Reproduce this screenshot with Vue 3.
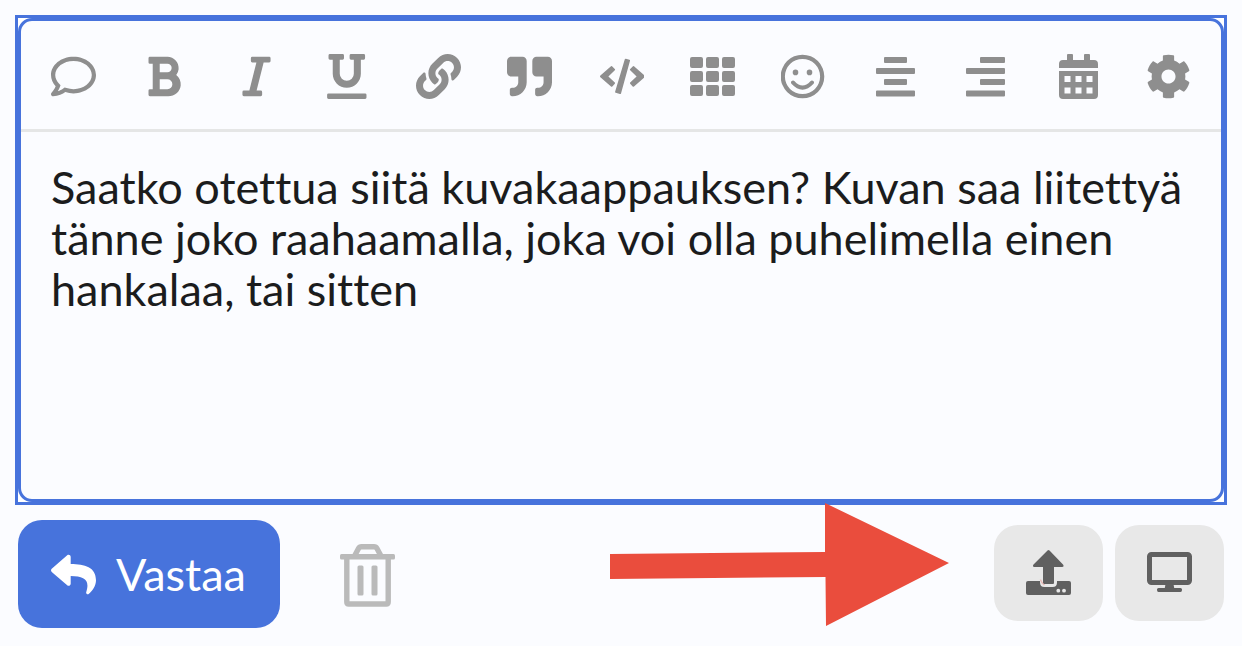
<script setup>
import { ref } from 'vue'

const message = ref(
  'Saatko otettua siitä kuvakaappauksen? Kuvan saa liitettyä tänne joko raahaamalla, joka voi olla puhelimella einen hankalaa, tai sitten'
)

const tools = [
  {
    label: 'Kommentti',
    box: '0 0 512 512',
    d: 'M256 32C114.6 32 0 125.1 0 240c0 47.6 19.9 91.2 52.9 126.3C38 405.7 7 439.1 6.5 439.5c-6.6 7-8.4 17.2-4.6 26S14.4 480 24 480c61.5 0 110-25.7 139.1-46.3C192 442.8 223.2 448 256 448c141.4 0 256-93.1 256-208S397.4 32 256 32zm0 368c-26.7 0-53.1-4.1-78.4-12.1l-22.7-7.2-19.5 13.8c-14.3 10.1-33.9 21.4-57.5 29 7.3-12.1 14.4-25.7 19.9-40.2l10.6-28.1-20.6-21.8C69.7 314.1 48 282.2 48 240c0-88.2 93.3-160 208-160s208 71.8 208 160-93.3 160-208 160z'
  },
  {
    label: 'Lihavointi',
    box: '-56 0 512 512',
    d: 'M333.49 238a122 122 0 0 0 27-65.21C367.87 96.49 308 32 233.42 32H34a16 16 0 0 0-16 16v48a16 16 0 0 0 16 16h31.87v288H34a16 16 0 0 0-16 16v48a16 16 0 0 0 16 16h209.32c70.8 0 134.14-51.75 141-122.4 4.74-48.45-16.39-92.06-50.83-119.6zM145.66 112h87.76a48 48 0 0 1 0 96h-87.76zm87.76 288h-87.76V288h87.76a56 56 0 0 1 0 112z'
  },
  {
    label: 'Kursivointi',
    box: '-96 0 512 512',
    d: 'M320 48v32a16 16 0 0 1-16 16h-62.76l-80 320H208a16 16 0 0 1 16 16v32a16 16 0 0 1-16 16H16a16 16 0 0 1-16-16v-32a16 16 0 0 1 16-16h62.76l80-320H112a16 16 0 0 1-16-16V48a16 16 0 0 1 16-16h192a16 16 0 0 1 16 16z'
  },
  {
    label: 'Alleviivaus',
    box: '-24 0 512 512',
    d: 'M32 64h32v160c0 88.22 71.78 160 160 160s160-71.78 160-160V64h32a16 16 0 0 0 16-16V16a16 16 0 0 0-16-16H272a16 16 0 0 0-16 16v32a16 16 0 0 0 16 16h32v160a80 80 0 0 1-160 0V64h32a16 16 0 0 0 16-16V16a16 16 0 0 0-16-16H32a16 16 0 0 0-16 16v32a16 16 0 0 0 16 16zm400 384H16a16 16 0 0 0-16 16v32a16 16 0 0 0 16 16h416a16 16 0 0 0 16-16v-32a16 16 0 0 0-16-16z'
  },
  {
    label: 'Linkki',
    box: '0 0 512 512',
    d: 'M326.612 185.391c59.747 59.809 58.927 155.698.36 214.59-.11.12-.24.25-.36.37l-67.2 67.2c-59.27 59.27-155.699 59.262-214.96 0-59.27-59.26-59.27-155.7 0-214.96l37.106-37.106c9.84-9.84 26.786-3.3 27.294 10.606.648 17.722 3.826 35.527 9.69 52.721 1.986 5.822.567 12.262-3.783 16.612l-13.087 13.087c-28.026 28.026-28.905 73.66-1.155 101.96 28.024 28.579 74.086 28.749 102.325.51l67.2-67.19c28.191-28.191 28.073-73.757 0-101.83-3.701-3.694-7.429-6.564-10.341-8.569a16.037 16.037 0 0 1-6.947-12.606c-.396-10.567 3.348-21.456 11.698-29.806l21.054-21.055c5.521-5.521 14.182-6.199 20.584-1.731a152.482 152.482 0 0 1 20.522 17.197zM467.547 44.449c-59.261-59.262-155.69-59.27-214.96 0l-67.2 67.2c-.12.12-.25.25-.36.37-58.566 58.892-59.387 154.781.36 214.59a152.454 152.454 0 0 0 20.521 17.196c6.402 4.468 15.064 3.789 20.584-1.731l21.054-21.055c8.35-8.35 12.094-19.239 11.698-29.806a16.037 16.037 0 0 0-6.947-12.606c-2.912-2.005-6.64-4.875-10.341-8.569-28.073-28.073-28.191-73.639 0-101.83l67.2-67.19c28.239-28.239 74.3-28.069 102.325.51 27.75 28.3 26.872 73.934-1.155 101.96l-13.087 13.087c-4.35 4.35-5.769 10.79-3.783 16.612 5.864 17.194 9.042 34.999 9.69 52.721.509 13.906 17.454 20.446 27.294 10.606l37.106-37.106c59.271-59.259 59.271-155.699.001-214.959z'
  },
  {
    label: 'Lainaus',
    box: '0 0 512 512',
    d: 'M464 32H336c-26.5 0-48 21.5-48 48v128c0 26.5 21.5 48 48 48h80v64c0 35.3-28.7 64-64 64h-8c-13.3 0-24 10.7-24 24v48c0 13.3 10.7 24 24 24h8c88.4 0 160-71.6 160-160V80c0-26.5-21.5-48-48-48zm-288 0H48C21.5 32 0 53.5 0 80v128c0 26.5 21.5 48 48 48h80v64c0 35.3-28.7 64-64 64h-8c-13.3 0-24 10.7-24 24v48c0 13.3 10.7 24 24 24h8c88.4 0 160-71.6 160-160V80c0-26.5-21.5-48-48-48z'
  },
  {
    label: 'Koodi',
    box: '-1 0 45 45',
    d: 'M.4 21.6 11 12.3q.7-.5 1.3.1l2.5 2.6q.6.7 0 1.3L8.4 22.4l6.4 6q.6.6 0 1.3l-2.5 2.7q-.6.5-1.3 0L.4 23.2q-.8-.8 0-1.6zM44.6 21.6 34 12.3q-.7-.5-1.3.1L30.2 15q-.6.7 0 1.3l6.4 6.1-6.4 6q-.6.6 0 1.3l2.5 2.7q.6.5 1.3 0l10.6-9.2q.8-.8 0-1.6zM25.9 4.7l3.5 1q.8.3.6 1.1l-9 32.6q-.3.8-1.1.6l-4.2-1.2q-.8-.2-.6-1l9.7-32.5q.3-.8 1.1-.6z'
  },
  {
    label: 'Taulukko',
    box: '0 0 45 45',
    d: [3, 17, 31]
      .flatMap(y => [0, 16, 32].map(x => `M${x + 2} ${y}h9q2 0 2 2v7q0 2-2 2h-9q-2 0-2-2v-7q0-2 2-2z`))
      .join('')
  },
  {
    label: 'Hymiö',
    box: '1 0 45 45',
    d: 'M22.5.7a21.8 21.8 0 1 0 0 43.6 21.8 21.8 0 0 0 0-43.6zm0 4.2a17.6 17.6 0 1 1 0 35.2 17.6 17.6 0 0 1 0-35.2zM15.5 15.6a2.8 2.8 0 1 0 0 5.6 2.8 2.8 0 0 0 0-5.6zm14 0a2.8 2.8 0 1 0 0 5.6 2.8 2.8 0 0 0 0-5.6zM14.6 27.2q7.9 8.6 15.8 0c1.9-1.9 4.7.5 3.2 2.6q-11.1 11.8-22.2 0c-1.5-2.1 1.3-4.5 3.2-2.6z'
  },
  {
    label: 'Keskitä',
    box: '-1 0 45 45',
    d: 'M12 3h21q1 0 1 1v4q0 1-1 1H12q-1 0-1-1V4q0-1 1-1zM4 14h37q1 0 1 1v4q0 1-1 1H4q-1 0-1-1v-4q0-1 1-1zM12 25h21q1 0 1 1v4q0 1-1 1H12q-1 0-1-1v-4q0-1 1-1zM4 36.5h37q1 0 1 1v4q0 1-1 1H4q-1 0-1-1v-4q0-1 1-1z'
  },
  {
    label: 'Tasaa oikealle',
    box: '1 0 45 45',
    d: 'M18 3h23q1 0 1 1v4q0 1-1 1H18q-1 0-1-1V4q0-1 1-1zM4 14h37q1 0 1 1v4q0 1-1 1H4q-1 0-1-1v-4q0-1 1-1zM18 25h23q1 0 1 1v4q0 1-1 1H18q-1 0-1-1v-4q0-1 1-1zM4 36.5h37q1 0 1 1v4q0 1-1 1H4q-1 0-1-1v-4q0-1 1-1z'
  },
  {
    label: 'Päivämäärä',
    box: '-1 0 45 45',
    d: 'M3 14v-4q0-4 4-4h4V1q0-1 1-1h4q1 0 1 1v5h11V1q0-1 1-1h4q1 0 1 1v5h4q4 0 4 4v4zM3 17h39v24q0 4-4 4H7q-4 0-4-4zM8.500 22v6h6v-6zm11 0v6h6v-6zm11 0v6h6v-6zM8.500 33.500v6h6v-6zm11 0v6h6v-6zm11 0v6h6v-6z'
  },
  {
    label: 'Asetukset',
    box: '0 0 512 512',
    d: 'M487.4 315.7l-42.6-24.6c4.3-23.2 4.3-47 0-70.2l42.6-24.6c4.9-2.8 7.1-8.6 5.5-14-11.1-35.6-30-67.8-54.7-94.6-3.8-4.1-10-5.1-14.8-2.3L380.8 110c-17.9-15.4-38.5-27.3-60.8-35.1V25.8c0-5.6-3.9-10.5-9.4-11.7-36.7-8.2-74.3-7.8-109.2 0-5.5 1.2-9.4 6.1-9.4 11.7V75c-22.2 7.9-42.8 19.8-60.8 35.1L88.7 85.5c-4.9-2.8-11-1.9-14.8 2.3-24.7 26.7-43.6 58.9-54.7 94.6-1.7 5.4.6 11.2 5.5 14L67.3 221c-4.3 23.2-4.3 47 0 70.2l-42.6 24.6c-4.9 2.8-7.1 8.6-5.5 14 11.1 35.6 30 67.8 54.7 94.6 3.8 4.1 10 5.1 14.8 2.3l42.6-24.6c17.9 15.4 38.5 27.3 60.8 35.1v49.2c0 5.6 3.9 10.5 9.4 11.7 36.7 8.2 74.3 7.8 109.2 0 5.5-1.2 9.4-6.1 9.4-11.7v-49.2c22.2-7.9 42.8-19.8 60.8-35.1l42.6 24.6c4.9 2.8 11 1.9 14.8-2.3 24.7-26.7 43.6-58.9 54.7-94.6 1.5-5.5-.7-11.3-5.6-14.1zM256 336c-44.1 0-80-35.9-80-80s35.9-80 80-80 80 35.9 80 80-35.9 80-80 80z'
  }
]
</script>

<template>
  <main class="composer">
    <div class="focus-frame">
      <div class="editor">
        <div class="toolbar" role="toolbar" aria-label="Muotoilu">
          <button v-for="tool in tools" :key="tool.label" type="button" class="tool" :aria-label="tool.label">
            <svg class="icon" :viewBox="tool.box" aria-hidden="true">
              <path :d="tool.d" fill="currentColor" fill-rule="evenodd" />
            </svg>
          </button>
        </div>
        <textarea v-model="message" class="message" aria-label="Viesti" spellcheck="false"></textarea>
      </div>
    </div>

    <div class="actions">
      <button type="button" class="reply">
        <svg class="icon" viewBox="0 0 512 512" aria-hidden="true">
          <path
            fill="currentColor"
            d="M8.309 189.836L184.313 37.851C199.719 24.546 224 35.347 224 56.015v80.053c160.629 1.839 288 34.032 288 186.258 0 61.441-39.581 122.309-83.333 154.132-13.653 9.931-33.111-2.533-28.077-18.631 45.344-145.012-21.507-183.51-176.59-185.742V360c0 20.7-24.3 31.453-39.687 18.164l-176.004-152c-11.071-9.562-11.086-26.753 0-36.328z"
          />
        </svg>
        <span>Vastaa</span>
      </button>

      <button type="button" class="discard" aria-label="Hylkää">
        <svg class="bin" viewBox="0 0 55 63" aria-hidden="true" fill="none" stroke="currentColor">
          <path d="M14.5 12 18.500 4.500Q19.500 2.700 21.500 2.700H34Q36 2.700 37 4.500L41 12" stroke-width="5.4" />
          <rect x="0" y="10" width="55" height="5.5" rx="1.5" fill="currentColor" stroke="none" />
          <path d="M6.800 14V58Q6.800 60 8.800 60H46.200Q48.200 60 48.200 58V14" stroke-width="5.4" />
          <rect x="17.5" y="21.5" width="6" height="30" rx="1.5" fill="currentColor" stroke="none" />
          <rect x="31.5" y="21.5" width="6" height="30" rx="1.5" fill="currentColor" stroke="none" />
        </svg>
      </button>

      <div class="attach">
        <button type="button" class="tile" aria-label="Lataa tiedosto">
          <svg class="icon" viewBox="0 0 45 45" aria-hidden="true">
            <rect y="31" width="45" height="14" rx="2" fill="currentColor" />
            <path d="M15.5 29v3.500q0 3 3 3h8q3 0 3-3V29" fill="currentColor" stroke="#e8e8e8" stroke-width="3" />
            <path d="M14.5 29.500q.5 3 4 5.500" fill="none" stroke="#e9b9b6" stroke-width="1.5" />
            <path
              fill="currentColor"
              d="M21.5.5q1-1 2 0L37 14.500q1.500 2.500-1 2.500H28v15q0 2-2 2h-7q-2 0-2-2V17H8.500Q6 17 7.500 14.500z"
            />
            <circle cx="32.3" cy="40.7" r="1.9" fill="#e8e8e8" />
            <circle cx="38" cy="40.7" r="1.9" fill="#e8e8e8" />
          </svg>
        </button>
        <button type="button" class="tile" aria-label="Näyttö">
          <svg class="icon" viewBox="0 0 45 45" aria-hidden="true">
            <rect x="2.5" y="4.5" width="40" height="28" rx="2" fill="none" stroke="currentColor" stroke-width="5" />
            <path
              fill="currentColor"
              d="M19.500 34h6q1 0 1.200 1.200l.5 2.800h6.300q1.500 0 1.500 1.500v.5q0 2-1.500 2h-22q-1.500 0-1.500-2v-.5q0-1.500 1.500-1.500h6.300l.5-2.800q.2-1.200 1.200-1.200z"
            />
          </svg>
        </button>
      </div>

      <svg class="pointer" viewBox="0 0 339 123" aria-hidden="true">
        <path fill="#ea4d3d" d="M0 51 215 49 215 0 339 60 216 123 215.500 74 0 76z" />
      </svg>
    </div>
  </main>
</template>

<style>
body {
  margin: 0;
  background: #fbfcff;
}
</style>

<style scoped>
.composer {
  display: flex;
  flex-direction: column;
  gap: 15px;
  padding: 15px;
  font-family: Lato, "Liberation Sans", sans-serif;
  font-size: 45px;
  font-variant-ligatures: none;
}

.composer * {
  box-sizing: border-box;
}

button {
  display: flex;
  align-items: center;
  justify-content: center;
  margin: 0;
  padding: 0;
  border: 0;
  background: none;
  color: inherit;
  font: inherit;
  cursor: pointer;
}

.icon {
  display: block;
  width: 45px;
  height: 45px;
}

.focus-frame {
  border: 3px solid #4773dc;
  background: #fff;
}

.editor {
  display: flex;
  flex-direction: column;
  overflow: hidden;
  border: 3px solid #4773dc;
  border-radius: 14px;
  background: #fbfcff;
}

.toolbar {
  display: flex;
  justify-content: space-between;
  padding: 33px 30px 30px;
  border-bottom: 3px solid #e5e6e6;
  color: #8e8e8e;
}

.message {
  display: block;
  width: 100%;
  height: 367px;
  margin: 0;
  padding: 30px;
  border: 0;
  outline: 0;
  overflow: hidden;
  resize: none;
  background: transparent;
  color: #1b1c1d;
  font: inherit;
  font-variant-ligatures: none;
  line-height: 51px;
}

.actions {
  position: relative;
  display: flex;
  align-items: center;
  padding: 0 3px;
}

.reply {
  gap: 20px;
  height: 108px;
  padding: 0 34px 0 33px;
  border-radius: 24px;
  background: #4773dc;
  color: #fff;
  font-variant-ligatures: none;
}

.discard {
  margin: 2px 0 0 60px;
  color: #bababa;
}

.bin {
  display: block;
  width: 55px;
  height: 63px;
}

.attach {
  display: flex;
  gap: 12px;
  margin: 0 0 2px auto;
}

.tile {
  width: 109px;
  height: 96px;
  padding-bottom: 2px;
  border-radius: 24px;
  background: #e8e8e8;
  color: #606060;
}

.pointer {
  position: absolute;
  top: -17px;
  right: 278px;
  width: 339px;
  height: 123px;
}
</style>
